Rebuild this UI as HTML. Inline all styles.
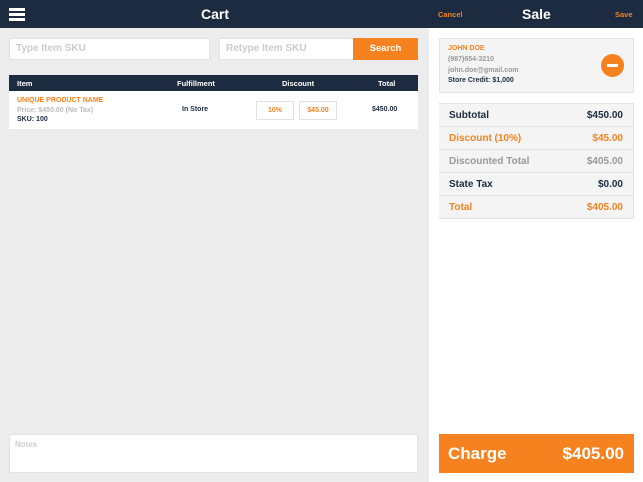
<html><head><style>
*{margin:0;padding:0;box-sizing:border-box}
body{width:643px;height:482px;overflow:hidden;font-family:"Liberation Sans",sans-serif;background:#fff;position:relative}
.a{position:absolute}
.hdr{left:0;top:0;width:643px;height:28px;background:#1c2b40}
.left{left:0;top:28px;width:429px;height:454px;background:#ececec}
.in{background:#fff;border:1px solid #e2e2e2;color:#ccc;font-size:10px;font-weight:bold;padding-left:6px;line-height:20px}
.th{font-size:7.5px;font-weight:bold;color:#fff}
.row{background:#f4f4f4;border-bottom:1px solid #e2e2e2;width:194px;left:439px;height:23px;font-size:10px;font-weight:bold;line-height:23px}
.row span{position:absolute;right:10px}
.row b{position:absolute;left:10px}
</style></head><body>
<div class="a hdr"></div>
<div class="a" style="left:9px;top:8px;width:16px;height:3px;background:#fff"></div>
<div class="a" style="left:9px;top:13px;width:16px;height:3px;background:#fff"></div>
<div class="a" style="left:9px;top:18px;width:16px;height:3px;background:#fff"></div>
<div class="a" style="left:201px;top:6px;color:#fff;font-size:14px;font-weight:bold">Cart</div>
<div class="a" style="left:438px;top:10px;color:#f5821f;font-size:7.5px;font-weight:bold">Cancel</div>
<div class="a" style="left:522px;top:6px;color:#fff;font-size:14px;font-weight:bold">Sale</div>
<div class="a" style="left:615px;top:10px;color:#f5821f;font-size:7.5px;font-weight:bold">Save</div>
<div class="a left"></div>
<div class="a in" style="left:9px;top:38px;width:201px;height:22px">Type Item SKU</div>
<div class="a in" style="left:219px;top:38px;width:135px;height:22px">Retype Item SKU</div>
<div class="a" style="left:353px;top:38px;width:65px;height:22px;background:#f5821f;color:#fff;font-size:9.5px;font-weight:bold;text-align:center;line-height:22px">Search</div>
<div class="a" style="left:9px;top:75px;width:409px;height:16px;background:#1c2b40"></div>
<div class="a th" style="left:17px;top:79px">Item</div>
<div class="a th" style="left:177px;top:79px">Fulfillment</div>
<div class="a th" style="left:282px;top:79px">Discount</div>
<div class="a th" style="left:378px;top:79px">Total</div>
<div class="a" style="left:9px;top:91px;width:409px;height:38px;background:#fff"></div>
<div class="a" style="left:17px;top:97px;font-size:7px;font-weight:bold;color:#f5821f">UNIQUE PRODUCT NAME</div>
<div class="a" style="left:17px;top:107px;font-size:7px;font-weight:bold;color:#bbb">Price: $450.00 (No Tax)</div>
<div class="a" style="left:17px;top:116px;font-size:7px;font-weight:bold;color:#1c2b40">SKU: 100</div>
<div class="a" style="left:182px;top:106px;font-size:7px;font-weight:bold;color:#1c2b40">In Store</div>
<div class="a" style="left:256px;top:101px;width:38px;height:19px;border:1px solid #e2e2e2;color:#f5821f;font-size:7px;font-weight:bold;text-align:center;line-height:17px">10%</div>
<div class="a" style="left:299px;top:101px;width:38px;height:19px;border:1px solid #e2e2e2;color:#f5821f;font-size:7px;font-weight:bold;text-align:center;line-height:17px">$45.00</div>
<div class="a" style="left:372px;top:106px;font-size:7px;font-weight:bold;color:#1c2b40">$450.00</div>
<div class="a" style="left:9px;top:434px;width:409px;height:39px;background:#fff;border:1px solid #e2e2e2;padding:5px;font-size:8px;font-weight:bold;color:#ccc">Notes</div>
<div class="a" style="left:439px;top:38px;width:195px;height:55px;background:#f4f4f4;border:1px solid #e4e4e4"></div>
<div class="a" style="left:448px;top:45px;font-size:7px;font-weight:bold;color:#f5821f">JOHN DOE</div>
<div class="a" style="left:448px;top:56px;font-size:7px;font-weight:bold;color:#999">(987)654-3210</div>
<div class="a" style="left:448px;top:67px;font-size:7px;font-weight:bold;color:#999">john.doe@gmail.com</div>
<div class="a" style="left:448px;top:77px;font-size:7px;font-weight:bold;color:#1c2b40">Store Credit: $1,000</div>
<div class="a" style="left:601px;top:54px;width:23px;height:23px;border-radius:50%;background:#f5821f"></div>
<div class="a" style="left:607px;top:64px;width:11px;height:3px;background:#fff"></div>
<div class="a" style="left:439px;top:103px;width:195px;height:116px;border:1px solid #e4e4e4;border-bottom:none"></div>
<div class="a row" style="top:104px;color:#1c2b40"><b>Subtotal</b><span>$450.00</span></div>
<div class="a row" style="top:127px;color:#f5821f"><b>Discount (10%)</b><span>$45.00</span></div>
<div class="a row" style="top:150px;color:#999"><b>Discounted Total</b><span>$405.00</span></div>
<div class="a row" style="top:173px;color:#1c2b40"><b>State Tax</b><span>$0.00</span></div>
<div class="a row" style="top:196px;color:#f5821f"><b>Total</b><span>$405.00</span></div>
<div class="a" style="left:439px;top:434px;width:195px;height:39px;background:#f5821f;color:#fff;font-size:17px;font-weight:bold;line-height:39px"><span style="position:absolute;left:9px">Charge</span><span style="position:absolute;right:10px">$405.00</span></div>
</body></html>
